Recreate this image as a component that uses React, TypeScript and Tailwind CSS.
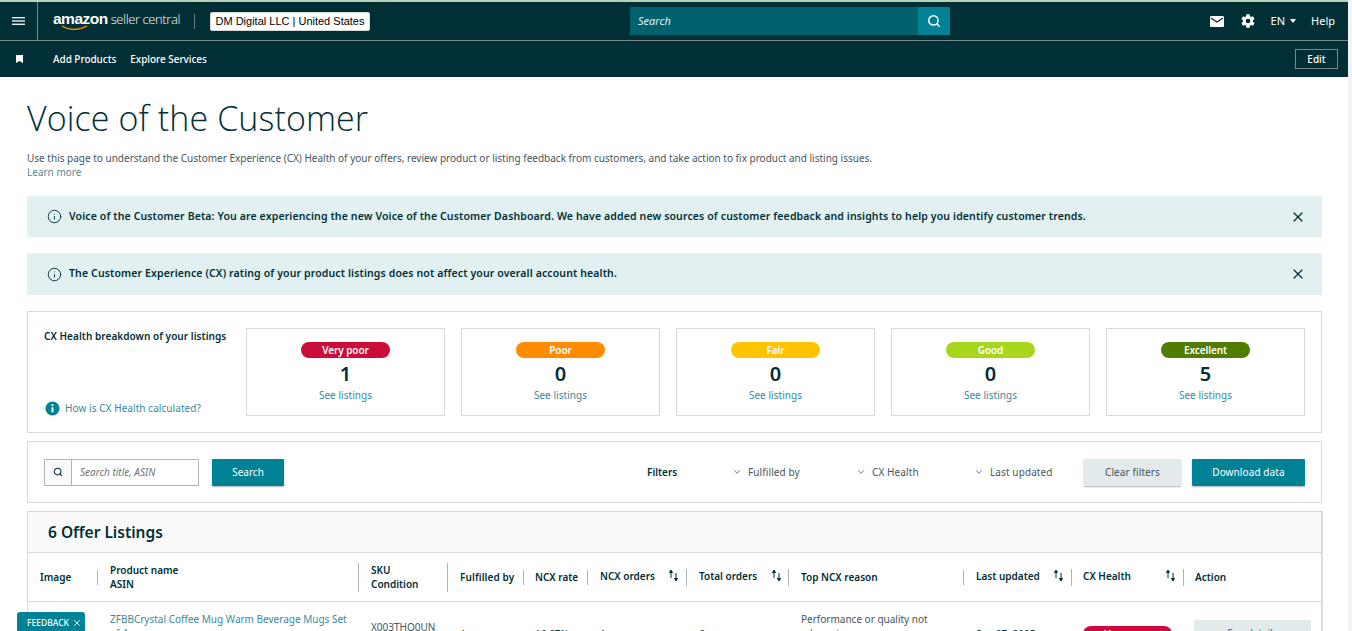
import { Search, X, Info, ChevronDown } from 'lucide-react'

const FONT = "font-['Noto_Sans',sans-serif]"

// ── Health summary cards ──────────────────────────────────────────────────────

const HEALTH = [
  { label: 'Very poor', count: 1, pill: 'bg-[#cc0c39] text-white' },
  { label: 'Poor', count: 0, pill: 'bg-[#ff8c00] text-white' },
  { label: 'Fair', count: 0, pill: 'bg-[#ffc400] text-white' },
  { label: 'Good', count: 0, pill: 'bg-[#a6d71c] text-white' },
  { label: 'Excellent', count: 5, pill: 'bg-[#507c00] text-white' },
]

function HealthCard({ label, count, pill }: { label: string; count: number; pill: string }) {
  return (
    <div className="w-[199px] h-[88px] border border-[#d5dbdb] flex flex-col items-center pt-[13px]">
      <div className={`w-[89px] h-4 rounded-full flex items-center justify-center text-[10px] font-semibold tracking-[-0.1px] ${pill}`}>
        {label}
      </div>
      <div className="mt-[3px] h-[26px] leading-[26px] text-[20px] font-semibold text-[#002f36]">{count}</div>
      <a className="mt-[1px] text-[10px] leading-[14px] tracking-[0.05px] text-[#358a9c]">See listings</a>
    </div>
  )
}

// ── Small icons ───────────────────────────────────────────────────────────────

function SortIcon() {
  return (
    <svg width="11" height="13" viewBox="0 0 11 13" className="shrink-0 -mt-[2px] text-[#002f36]">
      <path d="M3 9V3M1.5 3.5L3 1l1.5 2.5z" fill="currentColor" stroke="currentColor" strokeWidth="1" />
      <path d="M8 4v7M6.5 9.5L8 12l1.5-2.5z" fill="currentColor" stroke="currentColor" strokeWidth="1" />
    </svg>
  )
}

function Sep({ h = 'h-[15px]' }: { h?: string }) {
  return <span className={`w-px bg-[#aab7b8] shrink-0 ${h}`} />
}

function Notice({ text, height }: { text: string; height: string }) {
  return (
    <div className={`mt-4 ${height} bg-[#e3f0f1] flex items-center pl-[20px] pr-[16px]`}>
      <Info size={15} strokeWidth={1.5} className="text-[#002f36] shrink-0" />
      <p className="ml-[7px] text-[10.5px] font-semibold tracking-[0.13px] text-[#002f36] flex-1">{text}</p>
      <X size={16} strokeWidth={1.8} className="text-[#002f36]" />
    </div>
  )
}

function FilterSelect({ label, width }: { label: string; width: string }) {
  return (
    <div className={`flex items-center ${width}`}>
      <ChevronDown size={10} strokeWidth={2} className="text-[#44565b]" />
      <span className="ml-[6px] text-[10px] tracking-[0.1px] text-[#44565b]">{label}</span>
    </div>
  )
}

export default function App() {
  return (
    <div className={`${FONT} relative h-[631px] overflow-hidden bg-white flex`}>
      <div className="flex-1 min-w-0 flex flex-col">
        <div className="h-[2px] bg-[#b9d3b9]" />

        {/* ── Top nav ──────────────────────────────────────────────────────── */}
        <header className="h-[39px] bg-[#002f36] border-b border-[#7a8a8c] flex items-center text-white relative shrink-0">
          <div className="w-[38px] h-full border-r border-[#7a8a8c] flex items-center justify-center">
            <svg width="13" height="10" viewBox="0 0 13 10" fill="#e8eeee">
              <rect y="1" width="13" height="1.4" />
              <rect y="4.3" width="13" height="1.4" />
              <rect y="7.6" width="13" height="1.4" />
            </svg>
          </div>
          <div className="relative ml-[15px] flex items-baseline font-['Liberation_Sans',sans-serif] leading-none -mt-[5px]">
            <span className="text-[15.5px] font-bold tracking-[-0.5px]">amazon</span>
            <span className="ml-[3px] text-[13px] font-['Open_Sans',sans-serif] font-light tracking-[-0.4px]">seller central</span>
            <svg width="28" height="6" viewBox="0 0 28 6" className="absolute left-[8px] top-[14px]">
              <path d="M1 1c7 4.5 17 4.5 25 0" fill="none" stroke="#ff9900" strokeWidth="1.3" />
            </svg>
          </div>
          <span className="ml-[14px] w-px h-[15px] bg-[#6b7e80]" />
          <div className="ml-[15px] w-[160px] h-[19px] bg-white rounded-[2px] border border-[#d5dbdb] flex items-center justify-center text-[11px] text-black font-['Liberation_Sans',sans-serif]">
            DM Digital LLC | United States
          </div>

          <div className="absolute left-[630px] top-[5px] w-[320px] h-[28px] flex">
            <div className="flex-1 bg-[#00616e] flex items-center pl-2 text-[11px] italic text-[#e6f0f1]">Search</div>
            <div className="w-[32px] bg-[#008296] flex items-center justify-center">
              <Search size={14} strokeWidth={2.5} className="text-white" />
            </div>
          </div>

          <div className="ml-auto flex items-center">
            <svg width="14" height="11" viewBox="0 0 14 11">
              <rect width="14" height="11" rx="1.2" fill="#fff" />
              <path d="M1 2l6 4 6-4" fill="none" stroke="#002f36" strokeWidth="1.2" />
            </svg>
            <svg width="16" height="16" viewBox="0 0 24 24" fill="#fff" className="ml-[16px]">
              <path fillRule="evenodd" d="M19.4 13c.04-.33.1-.66.1-1s-.06-.67-.1-1l2.1-1.65c.2-.15.25-.42.13-.64l-2-3.46c-.12-.22-.39-.3-.61-.22l-2.49 1c-.52-.4-1.08-.73-1.69-.98l-.38-2.65A.5.5 0 0 0 14 2h-4a.5.5 0 0 0-.49.42l-.38 2.65c-.61.25-1.17.59-1.69.98l-2.49-1c-.23-.09-.49 0-.61.22l-2 3.46c-.13.22-.07.49.12.64L4.57 11c-.04.33-.07.66-.07 1s.03.67.07 1l-2.11 1.65c-.19.15-.25.42-.12.64l2 3.46c.12.22.39.3.61.22l2.49-1c.52.4 1.08.73 1.69.98l.38 2.65c.03.24.24.42.49.42h4c.25 0 .46-.18.49-.42l.38-2.65c.61-.25 1.17-.59 1.69-.98l2.49 1c.23.09.49 0 .61-.22l2-3.46c.12-.22.07-.49-.12-.64L19.4 13zM12 15.5a3.5 3.5 0 1 1 0-7 3.5 3.5 0 0 1 0 7z" />
            </svg>
            <span className="ml-[15px] text-[11px] text-white">EN</span>
            <span className="ml-[5px] w-0 h-0 border-x-[3.5px] border-x-transparent border-t-[4px] border-t-white" />
            <span className="ml-[15px] mr-[13px] text-[11px] text-white">Help</span>
          </div>
        </header>

        {/* ── Second nav ───────────────────────────────────────────────────── */}
        <nav className="h-9 bg-[#002f36] flex items-center text-white shrink-0">
          <svg width="7" height="8" viewBox="0 0 7 8" className="ml-[16px]" fill="#fff">
            <path d="M0 0h7v8L3.5 6 0 8z" />
          </svg>
          <span className="ml-[30px] text-[10px] font-medium tracking-[-0.05px]">Add Products</span>
          <span className="ml-[14px] text-[10px] font-medium tracking-[-0.05px]">Explore Services</span>
          <div className="ml-auto mr-[10px] w-[43px] h-[20px] border border-[#7a8a8c] flex items-center justify-center text-[10px] font-medium">
            Edit
          </div>
        </nav>

        {/* ── Page body ────────────────────────────────────────────────────── */}
        <main className="flex-1 overflow-hidden pl-[27px] pr-[26px]">
          <h1 className="mt-[19px] h-[44px] leading-[44px] text-[34px] font-light text-[#002f36] tracking-[0.1px] font-['Open_Sans',sans-serif]">
            Voice of the Customer
          </h1>
          <p className="mt-[11px] text-[10px] leading-[14px] text-[#44565b]">
            Use this page to understand the Customer Experience (CX) Health of your offers, review product or listing feedback from customers, and take action to fix product and listing issues.
          </p>
          <a className="block text-[10px] leading-[14px] text-[#5b8a96]">Learn more</a>

          <div className="h-px" />
          <Notice
            height="h-[41px]"
            text="Voice of the Customer Beta: You are experiencing the new Voice of the Customer Dashboard. We have added new sources of customer feedback and insights to help you identify customer trends."
          />
          <Notice
            height="h-[42px]"
            text="The Customer Experience (CX) rating of your product listings does not affect your overall account health."
          />

          {/* CX breakdown */}
          <section className="mt-4 h-[122px] border border-[#d5dbdb] flex pl-4 pr-4 pt-4">
            <div className="flex-1 flex flex-col h-[88px]">
              <p className="text-[10px] leading-[16px] font-semibold tracking-[0.05px] text-[#002f36]">CX Health breakdown of your listings</p>
              <div className="mt-auto flex items-center">
                <svg width="15" height="15" viewBox="0 0 15 15" className="ml-[1px] shrink-0">
                  <circle cx="7.5" cy="7.5" r="7" fill="#008296" />
                  <circle cx="7.5" cy="4.2" r="1.1" fill="#fff" />
                  <rect x="6.5" y="6.3" width="2" height="5" fill="#fff" />
                </svg>
                <a className="ml-[5px] text-[10px] tracking-[0.07px] text-[#358a9c]">How is CX Health calculated?</a>
              </div>
            </div>
            <div className="flex gap-4">
              {HEALTH.map((h) => (
                <HealthCard key={h.label} {...h} />
              ))}
            </div>
          </section>

          {/* Search and filters */}
          <section className="mt-2 h-[62px] border border-[#d5dbdb] flex items-center pl-4 pr-4">
            <div className="w-[155px] h-[27px] border border-[#aab7b8] flex">
              <div className="w-[27px] bg-[#fafafa] border-r border-[#aab7b8] flex items-center justify-center">
                <Search size={10} strokeWidth={2.5} className="text-[#002f36]" />
              </div>
              <div className="flex-1 flex items-center pl-2 pt-px text-[10px] italic text-[#6c7778]">Search title, ASIN</div>
            </div>
            <button className="ml-[13px] w-[72px] h-[27px] bg-[#008296] text-white text-[10px] rounded-[1px] shadow-[0_1px_2px_rgba(0,0,0,0.3)]">Search</button>
            <span className="ml-[363px] w-[85px] text-[10px] font-semibold text-[#002f36]">Filters</span>
            <FilterSelect label="Fulfilled by" width="w-[124px]" />
            <FilterSelect label="CX Health" width="w-[118px]" />
            <FilterSelect label="Last updated" width="w-[110px]" />
            <button className="w-[97px] h-[27px] ml-auto bg-[#e3eaeb] text-[#44565b] text-[10px] tracking-[0.1px] rounded-[1px] shadow-[0_1px_2px_rgba(0,0,0,0.3)]">Clear filters</button>
            <button className="ml-[11px] w-[113px] h-[27px] bg-[#008296] text-white text-[10px] tracking-[0.1px] rounded-[1px] shadow-[0_1px_2px_rgba(0,0,0,0.3)]">Download data</button>
          </section>

          {/* Listings table */}
          <section className="mt-2 border border-[#d5dbdb] shadow-[1px_0_1px_rgba(0,0,0,0.12)]">
            <div className="h-[41px] bg-[#fafafa] border-b border-[#d5dbdb] flex items-center pl-5 pt-[2px] text-[15.5px] font-semibold text-[#002f36]">
              6 Offer Listings
            </div>
            <div className="h-[49px] border-b border-[#d5dbdb] flex items-center text-[10px] font-semibold text-[#002f36]">
              <span className="w-[69px] pl-3">Image</span>
              <Sep />
              <span className="w-[260px] pl-3 leading-[14px]">Product name<br />ASIN</span>
              <Sep h="h-[29px]" />
              <span className="w-[88px] pl-3 leading-[14px]">SKU<br />Condition</span>
              <Sep h="h-[29px]" />
              <span className="w-[75px] pl-3 tracking-[0.1px]">Fulfilled by</span>
              <Sep />
              <span className="w-[63px] pl-[11px]">NCX rate</span>
              <Sep />
              <span className="w-[98px] pl-3 pr-[7px] flex items-center justify-between -mt-px">NCX orders<SortIcon /></span>
              <Sep h="h-[17px]" />
              <span className="w-[101px] pl-3 pr-[6px] flex items-center justify-between -mt-px">Total orders<SortIcon /></span>
              <Sep h="h-[17px]" />
              <span className="w-[174px] pl-3">Top NCX reason</span>
              <Sep />
              <span className="w-[107px] pl-3 pr-[7px] flex items-center justify-between -mt-px">Last updated<SortIcon /></span>
              <Sep h="h-[17px]" />
              <span className="w-[111px] pl-[11px] pr-[7px] flex items-center justify-between -mt-px">CX Health<SortIcon /></span>
              <Sep h="h-[17px]" />
              <span className="pl-[11px]">Action</span>
            </div>
            <div className="h-[60px] flex items-start text-[10px] text-[#002f36]">
              <div className="w-[70px]" />
              <a className="w-[261px] pl-3 pr-3 pt-[10px] leading-[14px] text-[#358a9c]">ZFBBCrystal Coffee Mug Warm Beverage Mugs Set of 4</a>
              <span className="w-[89px] pl-3 pt-[18px] leading-[14px] text-[#44565b]">X003THO0UN</span>
              <span className="w-[76px] pl-3 pt-[25px] leading-[14px]">Amazon</span>
              <span className="w-[64px] pl-[11px] pt-[25px] leading-[14px]">16.67%</span>
              <span className="w-[99px] pl-3 pt-[25px] leading-[14px]">1</span>
              <span className="w-[102px] pl-3 pt-[25px] leading-[14px]">6</span>
              <div className="w-[175px] pl-3 pt-[10px] leading-[14px] text-[#44565b]"><p className="w-[135px]">Performance or quality not adequate</p></div>
              <span className="w-[108px] pl-3 pt-[25px] leading-[14px]">Sep 27, 2025</span>
              <div className="w-[112px] pl-[11px] pt-[24px]">
                <div className="w-[89px] h-4 rounded-full bg-[#cc0c39] flex items-center justify-center text-[10px] font-semibold tracking-[-0.1px] text-white">Very poor</div>
              </div>
              <div className="pl-[10px] pt-[18px]">
                <button className="w-[117px] h-[27px] bg-[#e3eaeb] text-[#44565b] text-[10px] rounded-[1px]">See details</button>
              </div>
            </div>
          </section>
        </main>
      </div>

      {/* page scrollbar track */}
      <div className="w-[4px] shrink-0 bg-[#f3f3f3]" />

      {/* ── Feedback tab ─────────────────────────────────────────────────── */}
      <div className="absolute left-[17px] top-[612px] w-[68px] h-[22px] bg-[#008296] rounded-t-[3px] flex items-center pl-[10px] gap-[3px] text-[8.5px] font-medium text-white">
        FEEDBACK <X size={10} />
      </div>
    </div>
  )
}
